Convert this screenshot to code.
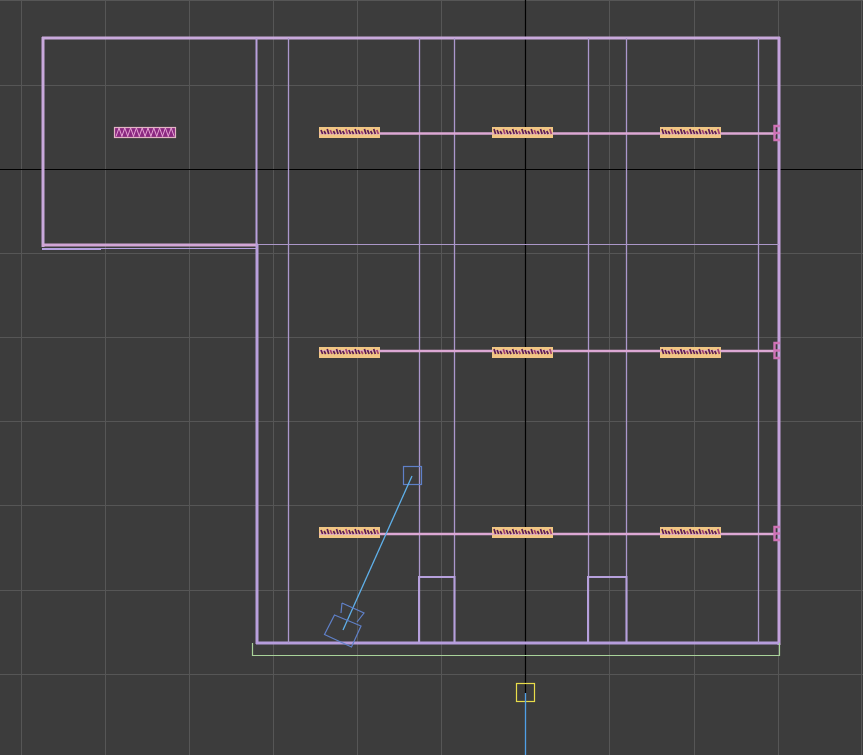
const gridX = [21, 105, 189, 273, 357, 441, 609, 694, 778, 861];
const gridY = [0, 85, 253, 337, 421, 505, 590, 674];
const labelX = [319, 492, 660];
const rows = [
  { top: 127, beam: 133.5, bracket: 125, bracketH: 16 },
  { top: 347, beam: 351, bracket: 342, bracketH: 17 },
  { top: 527, beam: 534, bracket: 526, bracketH: 15 },
];

function Line({ x1, y1, x2, y2, color, w = 1 }) {
  return <line x1={x1} y1={y1} x2={x2} y2={y2} stroke={color} strokeWidth={w} />;
}

function BeamLabel({ x, top, beam }) {
  const marks = [];
  for (let i = 0; i < 19; i++) {
    const mx = x + 2 + i * 3.1;
    const dy = (i * 7 + x) % 3;
    marks.push(
      <path
        key={i}
        d={`M${mx} ${top + 2 + dy}l1.6 ${5 - dy}`}
        fill="none"
        stroke={i % 5 === 3 ? "#a2426f" : "#5c1c54"}
        strokeWidth="1.7"
      />
    );
  }
  return (
    <g>
      <rect x={x} y={top} width="61" height="11" fill="#f1c684" />
      <Line x1={x} y1={beam} x2={x + 61} y2={beam} color="#e6b4b8" w={2} />
      {marks}
    </g>
  );
}

function ColumnLabel() {
  const marks = [];
  for (let i = 0; i < 10; i++) {
    const mx = 116 + i * 5.8;
    marks.push(
      <path key={i} d={`M${mx} 136.5l3 -8.5l3 8.5`} fill="none" stroke="#e6a4d4" strokeWidth="1" />
    );
  }
  return (
    <g>
      <rect x="114.5" y="127.5" width="61" height="10" fill="#8a2880" stroke="#e2b4c4" strokeWidth="1.2" />
      {marks}
    </g>
  );
}

function EndBracket({ y, h }) {
  return (
    <path
      d={`M780 ${y + 1}h-5.5v${h - 2}h5.5M774.5 ${y + h / 2}h5.5`}
      fill="none"
      stroke="#cf72b6"
      strokeWidth="2.4"
    />
  );
}

export default function App() {
  return (
    <div className="w-[863px] h-[755px] overflow-hidden bg-[#3c3c3c]">
      <svg className="block" width="863" height="755" viewBox="0 0 863 755">
        {/* grid */}
        {gridX.map((x) => (
          <Line key={x} x1={x + 0.5} y1={0} x2={x + 0.5} y2={755} color="#565656" />
        ))}
        {gridY.map((y) => (
          <Line key={y} x1={0} y1={y + 0.5} x2={863} y2={y + 0.5} color="#565656" />
        ))}
        <Line x1={525.5} y1={0} x2={525.5} y2={693} color="#000000" w={1.2} />
        <Line x1={0} y1={169.5} x2={863} y2={169.5} color="#000000" w={1.2} />

        {/* left wing */}
        <Line x1={42} y1={38} x2={780} y2={38} color="#c9a9dc" w={3} />
        <Line x1={43} y1={37} x2={43} y2={247} color="#c9a9dc" w={3} />
        <Line x1={42} y1={245} x2={258} y2={245} color="#d2a6d6" w={3} />
        <Line x1={42} y1={248.5} x2={257} y2={248.5} color="#b4a0e0" w={1.2} />
        <Line x1={42} y1={249.5} x2={101} y2={249.5} color="#b4a0e0" />

        {/* main shell */}
        <Line x1={256.5} y1={38} x2={256.5} y2={244} color="#b9a0dc" w={2} />
        <Line x1={257} y1={244} x2={257} y2={644} color="#b9a0dc" w={3} />
        <Line x1={779} y1={37} x2={779} y2={645} color="#c4a2dc" w={3} />
        <Line x1={256} y1={643} x2={780} y2={643} color="#b69ddc" w={3} />
        <Line x1={258} y1={244.5} x2={779} y2={244.5} color="#ab97c8" w={1.2} />

        {/* inner verticals */}
        {[288.5, 419.5, 454.5, 588.5, 626.5, 758.5].map((x) => (
          <Line key={x} x1={x} y1={38} x2={x} y2={643} color="#ab97cc" w={1.3} />
        ))}

        {/* door frames */}
        <path d="M419 643V577H454.5V643" fill="none" stroke="#b6a0dc" strokeWidth="2" />
        <path d="M588 643V577H626.5V643" fill="none" stroke="#b6a0dc" strokeWidth="2" />

        {/* beams */}
        {rows.map((row) => (
          <g key={row.top}>
            <Line x1={380} y1={row.beam} x2={776} y2={row.beam} color="#dca8d4" w={2.5} />
            {labelX.map((x) => (
              <BeamLabel key={x} x={x} top={row.top} beam={row.beam} />
            ))}
            <EndBracket y={row.bracket} h={row.bracketH} />
          </g>
        ))}
        <ColumnLabel />

        {/* ground outline */}
        <path d="M252.5 643V655.5H779.5V643" fill="none" stroke="#a9d39a" strokeWidth="1.2" />

        {/* camera */}
        <rect x="403.5" y="466.5" width="18" height="18" fill="none" stroke="#5f80c8" strokeWidth="1.2" />
        <Line x1={412} y1={476} x2={343} y2={630} color="#5fb0ea" w={1.3} />
        <path d="M334.5 615L361 626L351.5 647L324.5 634.5Z" fill="none" stroke="#5f80c8" strokeWidth="1.2" />
        <path d="M342 603L364 613L357 622M341 613L342 603" fill="none" stroke="#5f80c8" strokeWidth="1.2" />

        {/* light */}
        <rect x="516.5" y="683.5" width="18" height="18" fill="none" stroke="#e8dc4a" strokeWidth="1.2" />
        <Line x1={525.5} y1={693} x2={525.5} y2={755} color="#4f9fe6" w={1.3} />
      </svg>
    </div>
  );
}
